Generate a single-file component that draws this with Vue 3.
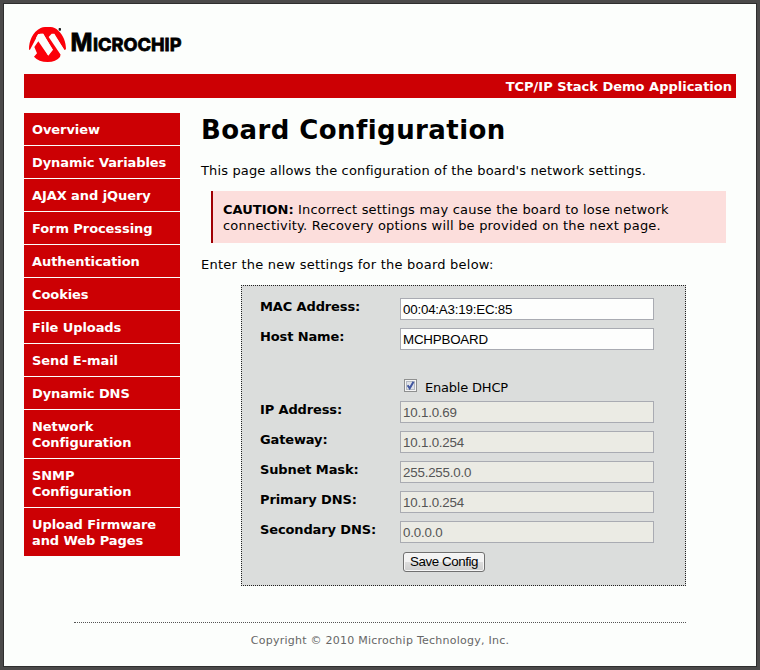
<script setup>
import { ref } from 'vue'

const nav = [
  'Overview',
  'Dynamic Variables',
  'AJAX and jQuery',
  'Form Processing',
  'Authentication',
  'Cookies',
  'File Uploads',
  'Send E-mail',
  'Dynamic DNS',
  'Network Configuration',
  'SNMP Configuration',
  'Upload Firmware and Web Pages'
]
const identity = ref([
  { label: 'MAC Address:', value: '00:04:A3:19:EC:85' },
  { label: 'Host Name:', value: 'MCHPBOARD' }
])
const network = ref([
  { label: 'IP Address:', value: '10.1.0.69' },
  { label: 'Gateway:', value: '10.1.0.254' },
  { label: 'Subnet Mask:', value: '255.255.0.0' },
  { label: 'Primary DNS:', value: '10.1.0.254' },
  { label: 'Secondary DNS:', value: '0.0.0.0' }
])
const dhcp = ref(true)
</script>

<template>
  <div class="page">
    <header>
      <svg class="logo" width="160" height="42" viewBox="0 0 160 42">
        <g transform="translate(2 0) scale(.33333)">
          <path fill="#fb0009" d="M9 77C9 50 20 24 44 12Q50 9 57 9H74Q86 9 97 20C112 34 120 54 120 76L115 78L84 30L72 37L104 90L102 99Q90 114 65 114Q38 114 24 98L33 88L25 69L39 49L66 94L80 77L52 29L37 30L12 77Z" />
          <path fill="#fcfefc" d="M36 31L44 29H51L81 77L67 95L30 42Z" />
          <path fill="#fcfefc" d="M68 39L77 29H85L115 78L112 92L103 91Z" />
          <rect x="98" y="12" width="7" height="8" rx="2" fill="#222" />
        </g>
        <g class="wordmark">
          <text x="46.5" y="27.2" font-size="23.6" textLength="22" lengthAdjust="spacingAndGlyphs">M</text>
          <text x="69" y="27.2" font-size="18" textLength="88.5" lengthAdjust="spacingAndGlyphs">ICROCHIP</text>
        </g>
      </svg>
      <div class="banner"><span>TCP/IP Stack Demo Application</span></div>
    </header>
    <div class="columns">
      <nav>
        <a v-for="n in nav" :key="n">{{ n }}</a>
      </nav>
      <main>
        <h1>Board Configuration</h1>
        <p class="intro">This page allows the configuration of the board's network settings.</p>
        <div class="caution"><b>CAUTION:</b> Incorrect settings may cause the board to lose network<br />connectivity. Recovery options will be provided on the next page.</div>
        <p class="enter">Enter the new settings for the board below:</p>
        <form @submit.prevent>
          <div v-for="f in identity" :key="f.label" class="row">
            <label>{{ f.label }}</label><input v-model="f.value" type="text" />
          </div>
          <div class="dhcp" @click="dhcp = !dhcp">
            <svg width="13" height="13" viewBox="0 0 13 13">
              <rect x=".5" y=".5" width="12" height="12" fill="#f4f4f4" stroke="#8e8f8f" />
              <rect x="2.5" y="2.5" width="8" height="8" fill="#dfe2e8" stroke="#b4b9c2" />
              <path v-if="dhcp" d="M3.6 6.3L5.7 9.3L9.5 2.7" fill="none" stroke="#4257a0" stroke-width="2" />
            </svg>
            <span>Enable DHCP</span>
          </div>
          <div v-for="f in network" :key="f.label" class="row">
            <label>{{ f.label }}</label><input v-model="f.value" type="text" :disabled="dhcp" />
          </div>
          <button type="submit">Save Config</button>
        </form>
      </main>
    </div>
    <footer><span>Copyright © 2010 Microchip Technology, Inc.</span></footer>
  </div>
</template>

<style>
body { background: #fcfefc; }
</style>

<style scoped>
.page {
  box-sizing: border-box;
  width: 760px;
  height: 670px;
  border: 4px solid #4b4a4a;
  padding: 20px;
  background: #fcfefc;
  outline: 1px solid #2e2e2e;
  outline-offset: -4px;
  color: #000;
  font: 13px/16px Verdana, "DejaVu Sans", sans-serif;
  overflow: hidden;
}
header { display: flex; flex-direction: column; height: 74px; }
.logo { display: block; flex: none; margin-bottom: 8px; }
.wordmark { font-family: Inter, sans-serif; font-weight: 700; fill: #000; stroke: #000; stroke-width: .8px; }
.banner {
  box-sizing: border-box;
  height: 24px;
  padding: 5px 4px 0 0;
  background: #cc0004;
  color: #fff;
  font-weight: 700;
  line-height: 16px;
  text-align: right;
  white-space: nowrap;
}
.columns { display: flex; margin-top: 15px; height: 509px; }
nav { display: flex; flex-direction: column; gap: 1px; width: 156px; flex: none; }
nav a {
  padding: 9px 8px 7px;
  background: #cc0004;
  color: #fff;
  font-weight: 700;
  letter-spacing: -.08px;
}
main { width: 525px; margin-left: 21px; flex: none; white-space: nowrap; }
h1 { margin: 0; padding-top: 1px; font-size: 26px; line-height: 32px; font-weight: 700; letter-spacing: .43px; }
p { margin: 0; }
.intro { margin-top: 17px; letter-spacing: .15px; }
.caution {
  margin: 12px 0 0 10px;
  padding: 11px 0 9px 10px;
  border-left: 2px solid #a00004;
  background: #fcdedc;
  letter-spacing: .2px;
}
.caution b { letter-spacing: 0; }
.enter { margin-top: 14px; letter-spacing: .23px; }
form {
  box-sizing: border-box;
  width: 445px;
  height: 301px;
  margin: 12px 0 0 40px;
  padding: 12px 0 0 18px;
  border: 1px dotted #222;
  background: #dbdddc;
}
.row { display: flex; height: 30px; }
label { width: 140px; padding-top: 1px; font-weight: 700; letter-spacing: -.13px; }
input {
  box-sizing: border-box;
  width: 254px;
  height: 22px;
  margin: 0;
  padding: 1px 2px;
  border: 1px solid #a9abb2;
  border-radius: 0;
  background: #fdfefd;
  color: #000;
  font: 13.33px "Liberation Sans", Arial, sans-serif;
  letter-spacing: -.2px;
}
input:disabled { background: #ebebe4; color: #555; }
.dhcp { display: flex; height: 43px; padding-left: 144px; align-items: flex-end; box-sizing: border-box; }
.dhcp svg { margin: 0 8px 9px 0; }
.dhcp span { margin-bottom: 5px; letter-spacing: -.2px; }
button {
  display: block;
  box-sizing: border-box;
  width: 82px;
  height: 20px;
  margin: 1px 0 0 143px;
  padding: 0;
  border: 1px solid #707070;
  border-radius: 3px;
  background: linear-gradient(#f3f3f3 0 48%, #dddddd 50%, #cfcfcf);
  box-shadow: inset 0 0 0 1px #f6f6f6;
  color: #000;
  font: 13.33px/18px "Liberation Sans", Arial, sans-serif;
  letter-spacing: -.4px;
}
footer {
  width: 612px;
  margin-left: 50px;
  padding-top: 10px;
  border-top: 1px dotted #555;
  color: #666;
  font-size: 11px;
  text-align: center;
  letter-spacing: .25px;
}
</style>
